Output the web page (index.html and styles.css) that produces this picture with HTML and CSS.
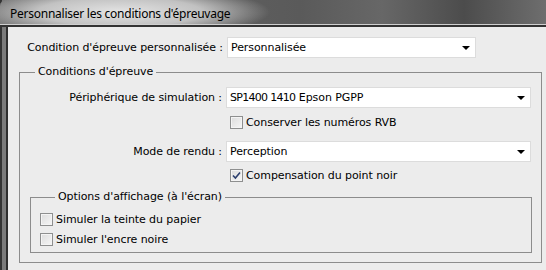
FILE: index.html
```html
<!DOCTYPE html>
<html lang="fr">
<head>
    <meta charset="UTF-8">
    <title>Personnaliser les conditions d'épreuvage</title>
    <link rel="stylesheet" href="styles.css">
</head>
<body>
    <div class="window">
        <div class="titlebar">
            <span class="title">Personnaliser les conditions d'épreuvage</span>
        </div>
        <div class="client">
            <div class="row top-row">
                <span class="label">Condition d'épreuve personnalisée :</span>
                <div class="select select-short">Personnalisée<i class="arrow"></i></div>
            </div>

            <fieldset class="group outer">
                <legend>Conditions d'épreuve</legend>

                <div class="row">
                    <span class="label">Périphérique de simulation :</span>
                    <div class="select select-wide"><span class="digits">SP1400 1410</span> Epson PGPP<i class="arrow"></i></div>
                </div>
                <label class="check indent">
                    <span class="box"></span>Conserver les numéros RVB
                </label>

                <div class="row">
                    <span class="label">Mode de rendu :</span>
                    <div class="select select-wide">Perception<i class="arrow"></i></div>
                </div>
                <label class="check indent indent-last">
                    <span class="box checked">
                        <svg width="9" height="9" viewBox="0 0 9 9"><path d="M1 4.5 L3.4 7 L8 1.5" fill="none" stroke="#2c3f6e" stroke-width="1.6"/></svg>
                    </span>Compensation du point noir
                </label>

                <fieldset class="group inner">
                    <legend>Options d'affichage (à l'écran)</legend>
                    <label class="check">
                        <span class="box"></span>Simuler la teinte du papier
                    </label>
                    <label class="check">
                        <span class="box"></span>Simuler l'encre noire
                    </label>
                </fieldset>
            </fieldset>
        </div>
    </div>
</body>
</html>
```

FILE: styles.css
```css
body {
    margin: 0;
    background: #ececec;
    font-family: "DejaVu Sans", sans-serif;
    font-size: 11px;
    letter-spacing: -0.08px;
    color: #000;
    overflow: hidden;
}
.window {
    width: 546px;
    height: 270px;
    background: linear-gradient(to right, #343434 0, #343434 2px, #7b7b7b 2px, #7b7b7b 6px, #2e2e2e 6px, #2e2e2e 8px, #ececec 8px);
}
.titlebar {
    height: 25px;
    display: flex;
    align-items: center;
    padding-left: 10px;
    border-bottom: 2px solid #333;
    box-shadow: inset 0 -1px 0 #cfcfcf;
    background:
        radial-gradient(ellipse 150px 26px at 120px 12px, rgba(235,235,235,0.95) 0, rgba(210,210,210,0.85) 55%, rgba(120,120,120,0) 100%),
        linear-gradient(to right, #6a6a6a 0, #5a5a5a 55%, #676767 70%, #4c4c4c 85%, #6e6e6e 100%);
    border-top-left-radius: 6px;
}
.title {
    font-family: "Noto Sans", sans-serif;
    font-size: 12px;
    letter-spacing: -0.25px;
    padding-top: 1px;
}
.client {
    margin-left: 8px;
    padding-top: 10px;
}
.row {
    display: flex;
    align-items: center;
}
.label {
    width: 202px;
    text-align: right;
    flex-shrink: 0;
}
.top-row .label {
    width: 215px;
}
.select {
    position: relative;
    box-sizing: border-box;
    height: 21px;
    margin-left: 4px;
    padding-left: 3px;
    line-height: 19px;
    background: #fff;
    border: 1px solid #dcdcdc;
}
.select-short {
    width: 249px;
}
.select-wide {
    width: 305px;
}
.digits {
    letter-spacing: -0.7px;
}
.arrow {
    position: absolute;
    right: 5px;
    top: 8px;
    border-left: 4px solid transparent;
    border-right: 4px solid transparent;
    border-top: 4px solid #000;
}
.group {
    margin: 0;
    padding: 0;
    border: 1px solid #8c8c8c;
    box-sizing: border-box;
}
.group legend {
    padding: 0 3px;
    line-height: 14px;
}
.outer {
    width: 523px;
    margin: 7px 0 0 11px;
    padding: 8px 0 9px 0;
}
.outer legend {
    margin-left: 15px;
}
.inner {
    width: 502px;
    margin: 0 0 0 10px;
    padding: 5px 0 3px 9px;
}
.inner legend {
    margin-left: 15px;
}
.check {
    display: flex;
    align-items: center;
    height: 20px;
}
.indent {
    margin: 4px 0 9px 210px;
}
.indent-last {
    margin: 3px 0 5px 210px;
}
.box {
    width: 11px;
    height: 11px;
    margin-right: 3px;
    border: 1px solid #8e8f8f;
    background: linear-gradient(135deg, #dcdcdc, #f6f6f6);
    box-shadow: inset 0 0 0 1px #f4f4f4;
    display: flex;
    align-items: center;
    justify-content: center;
}
```
